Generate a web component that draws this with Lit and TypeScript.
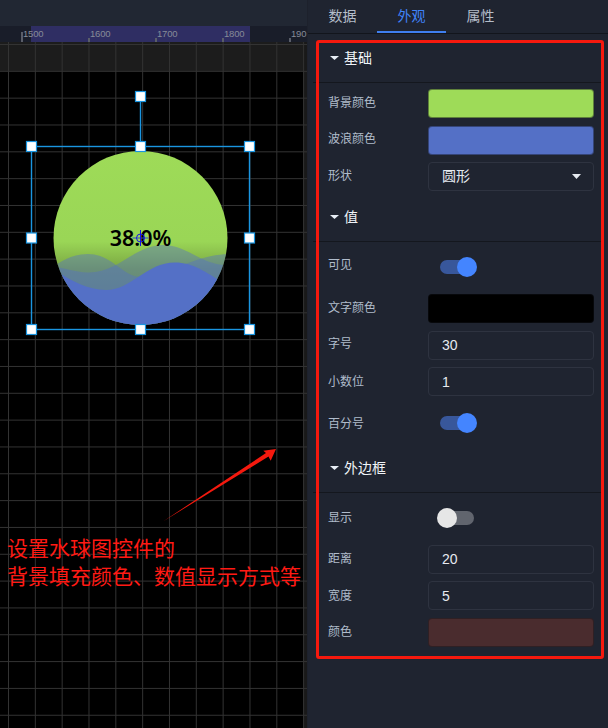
import { LitElement, html, css, svg } from "lit";
import { customElement } from "lit/decorators.js";

type Base = { label: string; dy?: number };
type Row =
  | (Base & { kind: "swatch"; color: string })
  | (Base & { kind: "select"; value: string })
  | (Base & { kind: "input"; value: string })
  | (Base & { kind: "toggle"; on: boolean });

const SECTIONS: { title: string; rows: Row[] }[] = [
  {
    title: "基础",
    rows: [
      { kind: "swatch", label: "背景颜色", color: "#9edb58" },
      { kind: "swatch", label: "波浪颜色", color: "#5470c6", dy: -1 },
      { kind: "select", label: "形状", value: "圆形" },
    ],
  },
  {
    title: "值",
    rows: [
      { kind: "toggle", label: "可见", on: true, dy: -2 },
      { kind: "swatch", label: "文字颜色", color: "#000000" },
      { kind: "input", label: "字号", value: "30", dy: -1 },
      { kind: "input", label: "小数位", value: "1", dy: 1 },
      { kind: "toggle", label: "百分号", on: true, dy: 2 },
    ],
  },
  {
    title: "外边框",
    rows: [
      { kind: "toggle", label: "显示", on: false, dy: 1 },
      { kind: "input", label: "距离", value: "20" },
      { kind: "input", label: "宽度", value: "5", dy: 1 },
      { kind: "swatch", label: "颜色", color: "#4a2c2e" },
    ],
  },
];

const RULER = [
  { n: "1500", x: 23 },
  { n: "1600", x: 90 },
  { n: "1700", x: 157 },
  { n: "1800", x: 224 },
  { n: "190", x: 291 },
];

const HANDLES: [number, number][] = [
  [31.5, 104.5], [140.5, 104.5], [249.5, 104.5],
  [31.5, 196], [249.5, 196],
  [31.5, 287.5], [140.5, 287.5], [249.5, 287.5],
  [140.5, 54.5],
];

@customElement("app-root")
export class AppRoot extends LitElement {
  static styles = css`
    :host {
      display: flex;
      width: 608px;
      height: 728px;
      overflow: hidden;
      background: #1f2430;
      font-family: "Liberation Sans", "Noto Sans CJK SC", sans-serif;
    }
    .main { width: 307px; display: flex; flex-direction: column; flex: none; }
    .topbar { height: 26px; background: #212733; flex: none; }
    .ruler {
      height: 16px; flex: none; position: relative; background: #191d29;
      overflow: hidden;
    }
    .ruler .hl { position: absolute; left: 31px; width: 219px; top: 0; bottom: 0; background: #2f2e63; }
    .ruler .num { position: absolute; top: 1px; font-size: 9.5px; letter-spacing: -0.2px; line-height: 14px; color: #868b97; }
    .ruler .tick { position: absolute; bottom: 0; width: 2px; height: 4px; background: #5a5e69; }
    .ruler .tick.long { height: 10px; }
    .canvas {
      flex: 1; position: relative; overflow: hidden; background-color: #000;
    }
    .band { position: absolute; left: 0; right: 0; top: 0; height: 29px; background: #1c1c1c; }
    .strip { position: absolute; right: 0; top: 0; bottom: 0; width: 4px; background: #191919; }
    .grid { position: absolute; inset: 0; }
    .stage { position: absolute; left: 0; top: 0; }
    .note {
      position: absolute; left: 7px; top: 490.5px; font-size: 21px; line-height: 28.6px;
      color: #ff1a14; white-space: nowrap; font-weight: 400;
      font-family: "Noto Sans CJK SC", sans-serif;
    }
    .sep { width: 1px; flex: none; background: #1d212c; }
    .panel { flex: 1; position: relative; padding-left: 5px; padding-right: 4px; background: #1f2430; }
    .tabs { height: 33px; margin-left: -5px; margin-right: -4px; display: flex; border-bottom: 1px solid #12151c; position: relative; }
    .tab { width: 69px; text-align: center; font-size: 14px; line-height: 31px; color: #b4bdc9; box-sizing: border-box; height: 33px; font-family: "Noto Sans CJK SC", sans-serif; }
    .tab.active { color: #3f83f8; border-bottom: 2px solid #3f7ff0; }
    .head {
      height: 49px; display: flex; align-items: center; gap: 5px; padding-left: 17px;
      border-bottom: 1px solid #14171e; box-sizing: border-box;
      font-size: 14px; color: #f0f4f8; font-family: "Noto Sans CJK SC", sans-serif;
    }
    .head svg { flex: none; }
    .head span { margin-bottom: 2px; }
    .body { padding: 6px 0 2px 10px; display: flex; flex-direction: column; gap: 7.67px; }
    .row { display: grid; grid-template-columns: 100px 166px; align-items: center; padding-left: 5px; height: 29px; }
    .row.t { height: 38px; }
    .label { font-size: 12px; line-height: 16px; color: #b0bccb; padding-bottom: 3px; font-family: "Noto Sans CJK SC", sans-serif; }
    .swatch { height: 100%; border-radius: 4px; box-sizing: border-box; border: 1px solid rgba(16, 18, 24, 0.45); }
    .box {
      height: 100%; border-radius: 4px; box-sizing: border-box; border: 1px solid #2e3340;
      display: flex; align-items: center; justify-content: space-between; padding: 0 12px 0 13px;
      font-size: 14px; color: #e6eaf0;
    }
    .box .cjk { margin-bottom: 4px; }
    .toggle { position: relative; height: 14px; width: 32px; border-radius: 7px; margin-left: 12px; background: #38579b; }
    .toggle.off { margin-left: 14px; background: #61656e; }
    .knob { position: absolute; top: -3px; left: 17px; width: 20px; height: 20px; border-radius: 50%; background: #4485ff; }
    .toggle.off .knob { left: -5px; background: #e6e6e6; }
    .frame {
      position: absolute; left: 8px; top: 40px; width: 288px; height: 619px; box-sizing: border-box;
      border: 3px solid #f5190e; border-radius: 3px; pointer-events: none;
    }
  `;

  private gridLines() {
    const v: unknown[] = [];
    for (let i = 0; i < 12; i++) {
      const x = 8.5 + i * 26.83;
      v.push(svg`<line x1=${x} x2=${x} y1="0" y2="686" stroke="#333" stroke-width="1"></line>`);
    }
    for (let i = 0; i < 26; i++) {
      const y = 2.5 + i * 26.83;
      v.push(svg`<line x1="0" x2="307" y1=${y} y2=${y} stroke="#333" stroke-width="1"></line>`);
    }
    return v;
  }

  private liquid() {
    return svg`
      <defs>
        <clipPath id="c"><circle cx="140.5" cy="196" r="87"></circle></clipPath>
        <linearGradient id="bg" x1="0" x2="0" y1="109" y2="283" gradientUnits="userSpaceOnUse">
          <stop offset="0" stop-color="#9edb58"></stop>
          <stop offset="0.52" stop-color="#9ad656"></stop>
          <stop offset="0.68" stop-color="#7aa642"></stop>
          <stop offset="1" stop-color="#6a8e38"></stop>
        </linearGradient>
      </defs>
      <circle cx="140.5" cy="196" r="87" fill="url(#bg)"></circle>
      <g clip-path="url(#c)">
        <path d="M40 226 C 60 222, 68 230, 88 230.5 C 118 231, 135 203, 163 203 C 190 203, 205 228, 235 222 L 235 290 L 40 290 Z" fill="#5470c6" fill-opacity="0.42"></path>
        <path d="M40 235 C 55 222, 70 212, 88 212 C 112 212, 122 234, 140 235 C 165 236, 195 212, 230 212 L 235 290 L 40 290 Z" fill="#5470c6" fill-opacity="0.42"></path>
        <path d="M40 218 C 60 232, 82 248, 106 248 C 132 248, 146 220.5, 175 220.5 C 195 220.5, 208 232, 235 248 L 235 290 L 40 290 Z" fill="#5470c6"></path>
      </g>
      <text x="140.5" y="204" text-anchor="middle" font-size="21.5" font-weight="600" fill="#000" font-family="'Noto Sans', sans-serif">38.0%</text>
      <path d="M132.5 196 H148.5" stroke="#2a4bd0" stroke-width="1"></path>
      <path d="M140.5 188 V204" stroke="#1414e6" stroke-width="1"></path>
      <circle cx="140.5" cy="196" r="4" fill="none" stroke="#1414e6" stroke-width="1"></circle>
      <rect x="31.5" y="104.5" width="218" height="183" fill="none" stroke="#1a95e0" stroke-width="1.4"></rect>
      <path d="M140.5 54 V104" stroke="#1a95e0" stroke-width="1.4"></path>
      ${HANDLES.map(
        ([x, y]) => svg`<rect x=${x - 5} y=${y - 5} width="10" height="10" fill="#fff" stroke="#1a95e0" stroke-width="1.2"></rect>`
      )}
      <path d="M163 479.5 L266 411 L263.3 408.7 L276 407 L270.7 418.7 L268.5 414.5 Z" fill="#f5190e"></path>
    `;
  }

  private label(r: Row) {
    const shift = r.dy ? `transform:translateY(${r.dy}px)` : "";
    return html`<div class="label" style=${shift}>${r.label}</div>`;
  }

  private renderRow(r: Row) {
    switch (r.kind) {
      case "swatch":
        return html`<div class="row">${this.label(r)}<div class="swatch" style="background:${r.color}"></div></div>`;
      case "select":
        return html`<div class="row">${this.label(r)}<div class="box"><span class="cjk">${r.value}</span>
          <svg width="9" height="5" viewBox="0 0 9 5"><path d="M0 0H9L4.5 5Z" fill="#e6eaf0"></path></svg></div></div>`;
      case "input":
        return html`<div class="row">${this.label(r)}<div class="box">${r.value}</div></div>`;
      case "toggle":
        return html`<div class="row t">${this.label(r)}<div class="toggle ${r.on ? "" : "off"}"><div class="knob"></div></div></div>`;
    }
  }

  render() {
    return html`
      <div class="main">
        <div class="topbar"></div>
        <div class="ruler">
          <div class="hl"></div>
          ${RULER.map(
            (t, i) => html`<div class="tick ${i === 0 ? "long" : ""}" style="left:${t.x - 2}px"></div>
              <div class="num" style="left:${t.x}px">${t.n}</div>`
          )}
        </div>
        <div class="canvas">
          <div class="band"></div>
          <div class="strip"></div>
          <svg class="grid" width="307" height="686">${this.gridLines()}</svg>
          <svg class="stage" width="307" height="686">${this.liquid()}</svg>
          <div class="note">设置水球图控件的<br />背景填充颜色、数值显示方式等</div>
        </div>
      </div>
      <div class="sep"></div>
      <div class="panel">
        <div class="tabs">
          <div class="tab">数据</div>
          <div class="tab active">外观</div>
          <div class="tab">属性</div>
        </div>
        ${SECTIONS.map(
          (s) => html`<div class="head">
              <svg width="9" height="4" viewBox="0 0 9 4"><path d="M0 0H9L4.5 4Z" fill="#e8eef5"></path></svg>
              <span>${s.title}</span>
            </div>
            <div class="body">${s.rows.map((r) => this.renderRow(r))}</div>`
        )}
        <div class="frame"></div>
      </div>
    `;
  }
}
